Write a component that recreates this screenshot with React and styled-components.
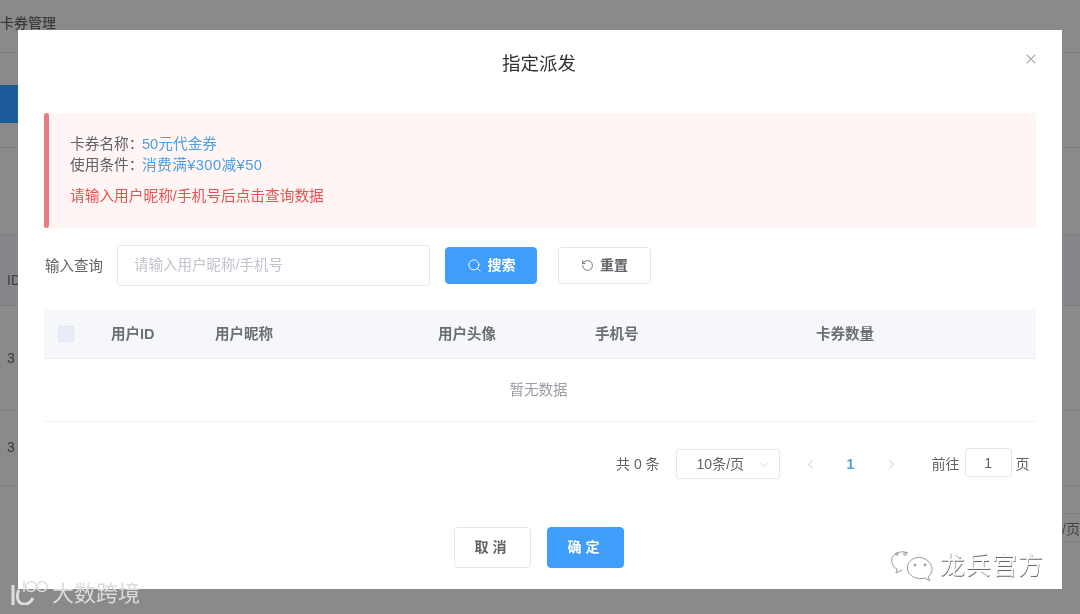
import styled, { createGlobalStyle } from 'styled-components';
import { ChevronDown, ChevronLeft, ChevronRight, RotateCw, Search, X } from 'lucide-react';

const GlobalStyle = createGlobalStyle`
  html, body {
    margin: 0;
    padding: 0;
    overflow: hidden;
    background: #8a8a8a;
  }

  * {
    box-sizing: border-box;
  }

  body {
    font-family: "Liberation Sans", "Noto Sans CJK SC", sans-serif;
  }
`;

const Screen = styled.div`
  position: relative;
  width: 1080px;
  height: 614px;
  overflow: hidden;
  background: #8a8a8a;
  filter: blur(0.45px);
`;

const BackPage = styled.div`
  display: flex;
  flex-direction: column;
  height: 100%;
  color: #3a3a3a;
  font-size: 14px;
`;

const BackRow = styled.div`
  flex: none;
  display: flex;
  align-items: ${(props) => props.$align || 'center'};
  height: ${(props) => props.$height}px;
  padding: ${(props) => props.$padding || '0 0 0 7px'};
  background: ${(props) => props.$tint || 'transparent'};
  border-bottom: 1px solid #7e7e7e;
  white-space: nowrap;
`;

const BackTitle = styled.span`
  font-weight: 500;
  color: #3c3c3c;
`;

const BackButton = styled.div`
  width: 18px;
  height: 38px;
  margin-top: 32px;
  background: #1c5c9a;
`;

const BackPager = styled.div`
  display: flex;
  align-items: center;
  justify-content: flex-end;
  align-self: flex-end;
  width: 40px;
  height: 29px;
  margin-top: 27px;
  color: #444;
  border-top: 1px solid #7e7e7e;
  border-bottom: 1px solid #7e7e7e;
`;

const Dialog = styled.section`
  position: absolute;
  top: 30px;
  left: 18px;
  display: flex;
  flex-direction: column;
  width: 1044px;
  height: 559px;
  padding: 0 26px;
  background: #fff;
`;

const Title = styled.h2`
  margin: 0;
  padding: 23px 2px 0 0;
  height: 83px;
  font-size: 18.5px;
  font-weight: 400;
  line-height: 22px;
  text-align: center;
  color: #303133;
`;

const CloseButton = styled.button`
  position: absolute;
  top: 21px;
  right: 23px;
  display: flex;
  width: 16px;
  height: 16px;
  padding: 0;
  color: #a9adb4;
  background: none;
  border: none;
`;

const Alert = styled.div`
  position: relative;
  height: 115px;
  padding: 21px 26px 0;
  font-size: 14.7px;
  line-height: 21px;
  color: #606266;
  background: #fff5f5;
  border-radius: 3px;

  &::before {
    content: '';
    position: absolute;
    top: 0;
    bottom: 0;
    left: 0;
    width: 5px;
    background: #ea7b83;
    border-radius: 3px;
  }
`;

const Value = styled.span`
  margin-left: -1.5px;
  letter-spacing: ${(props) => props.$spacing || 0}px;
  color: #4b9fe3;
`;

const AlertHint = styled.div`
  margin-top: 10px;
  color: #ee4f4f;
`;

const SearchRow = styled.div`
  display: flex;
  align-items: center;
  height: 41px;
  margin-top: 17px;
`;

const SearchLabel = styled.label`
  width: 73px;
  padding: 0 0 3px 1px;
  font-size: 14.5px;
  color: #606266;
`;

const SearchInput = styled.input`
  width: 313px;
  height: 41px;
  padding: 0 16px 2px;
  font-family: inherit;
  font-size: 14.5px;
  background: #fff;
  border: 1px solid #e4e7ed;
  border-radius: 4px;

  &::placeholder {
    color: #c0c4cc;
  }
`;

const Button = styled.button`
  display: inline-flex;
  align-items: center;
  justify-content: center;
  gap: ${(props) => props.$gap || 6}px;
  width: ${(props) => props.$width}px;
  height: ${(props) => props.$height}px;
  margin-left: ${(props) => props.$left || 0}px;
  padding: 0 0 3px;
  font-family: inherit;
  font-size: 14px;
  font-weight: 700;
  letter-spacing: ${(props) => props.$spacing || 0}px;
  color: ${(props) => (props.$primary ? '#fff' : '#606266')};
  background: ${(props) => (props.$primary ? '#3f9efc' : '#fff')};
  border: 1px solid ${(props) => (props.$primary ? '#3f9efc' : '#e4e7ed')};
  border-radius: 4px;

  svg {
    margin-top: 3px;
  }
`;

const TableHead = styled.div`
  display: grid;
  grid-template-columns: 67px 104px 223px 157px 221px 1fr;
  align-items: center;
  height: 49px;
  margin-top: 24px;
  padding-bottom: 3px;
  font-size: 14.5px;
  font-weight: 700;
  color: #6b6e74;
  background: #f5f7fa;
  border-bottom: 1px solid #e9ecf1;
`;

const CheckCell = styled.div`
  padding: 3px 0 0 14px;
`;

const CheckBox = styled.span`
  display: block;
  width: 16px;
  height: 16px;
  background: #e9edf8;
  border: 1px solid #e1e6f3;
  border-radius: 2px;
`;

const Empty = styled.div`
  display: flex;
  align-items: center;
  justify-content: center;
  height: 63px;
  padding: 0 3px 4px 0;
  font-size: 14.5px;
  color: #9a9da3;
  border-bottom: 1px solid #f0f1f4;
`;

const Pager = styled.div`
  display: flex;
  align-items: center;
  height: 30px;
  margin-top: 27px;
  padding-left: 572px;
  font-size: 14px;
  line-height: 28px;
  color: #606266;
`;

const PagerText = styled.span`
  padding-bottom: 1px;
`;

const Select = styled.div`
  display: flex;
  align-items: center;
  justify-content: space-between;
  width: 104px;
  height: 30px;
  margin-left: 16px;
  padding: 0 8px 0 20px;
  color: #606266;
  border: 1px solid #e4e7ed;
  border-radius: 3px;
`;

const PageArrow = styled.span`
  display: flex;
  justify-content: center;
  width: 16px;
  margin-left: ${(props) => props.$left}px;
  color: #c0c4cc;
`;

const PageNumber = styled.span`
  width: 8px;
  margin-left: 28px;
  font-weight: 700;
  color: #4b9fe3;
`;

const GoLabel = styled(PagerText)`
  margin-left: 32px;
`;

const PageInput = styled.div`
  align-self: flex-start;
  width: 47px;
  height: 29px;
  margin: -1px 4px 0 5px;
  font-size: 14px;
  line-height: 28px;
  text-align: center;
  border: 1px solid #e4e7ed;
  border-radius: 3px;
`;

const Footer = styled.div`
  display: flex;
  justify-content: center;
  gap: 16px;
  margin-top: 48px;
  padding-right: 2px;
`;

const WeChatMark = styled.div`
  position: absolute;
  top: 550px;
  left: 891px;
  display: flex;
  align-items: center;
  gap: 6px;
  font-size: 25px;
  letter-spacing: 1px;
  color: #fafafa;
  text-shadow: 0.6px 0.6px 0.6px #666;
`;

const WeChatText = styled.span`
  margin-top: -7px;
`;

const BrandMark = styled.div`
  position: absolute;
  top: 575px;
  left: 9px;
  display: flex;
  align-items: flex-end;
  gap: 3px;
  font-size: 22px;
  color: #dcdcdc;
`;

const BrandText = styled.span`
  margin-bottom: -1px;
  line-height: 24px;
`;

function WeChatIcon() {
  return (
    <svg width="43" height="32" viewBox="0 0 43 32" fill="none" stroke="#9a9a9a" strokeWidth="1">
      <path d="M17 3C10 0 3 3 1 8c-1 5 1 9 5 11l-1 4 6-3" />
      <circle cx="6" cy="4" r="1.3" />
      <circle cx="14" cy="4" r="1.3" />
      <path d="M37 27c4-3 5-8 3-12-3-6-10-9-16-7-6 2-9 8-7 13 2 6 10 9 17 7l5 3z" fill="#fff" />
      <circle cx="24" cy="15" r="1" fill="#999" />
      <circle cx="34" cy="15" r="1" fill="#999" />
    </svg>
  );
}

function BrandIcon() {
  return (
    <svg width="40" height="30" viewBox="0 0 40 30" fill="none" stroke="#dedede">
      <path d="M4 10v20" strokeWidth="3" />
      <path d="M10 15c-3 5-2 13 4 14 4 1 8-2 10-6" strokeWidth="3" />
      <path d="M15 6v11" strokeWidth="1.5" />
      <circle cx="22" cy="11.5" r="5" strokeWidth="1.6" />
      <circle cx="33" cy="11.5" r="5" strokeWidth="1.6" />
    </svg>
  );
}

export default function App() {
  return (
    <Screen>
      <GlobalStyle />
      <BackPage>
        <BackRow $height={53} $padding="0 0 8px 0">
          <BackTitle>卡券管理</BackTitle>
        </BackRow>
        <BackRow $height={95} $align="flex-start" $padding="0">
          <BackButton />
        </BackRow>
        <BackRow $height={87} />
        <BackRow $height={71} $tint="#84868a" $padding="20px 0 0 7px">ID</BackRow>
        <BackRow $height={105}>3</BackRow>
        <BackRow $height={75} $padding="0 0 2px 7px">3</BackRow>
        <BackPager>/页</BackPager>
      </BackPage>

      <Dialog>
        <Title>指定派发</Title>
        <CloseButton aria-label="关闭">
          <X size={16} strokeWidth={1.6} />
        </CloseButton>

        <Alert>
          <div>卡券名称：<Value>50元代金券</Value></div>
          <div>使用条件：<Value $spacing={0.4}>消费满¥300减¥50</Value></div>
          <AlertHint>请输入用户昵称/手机号后点击查询数据</AlertHint>
        </Alert>

        <SearchRow>
          <SearchLabel>输入查询</SearchLabel>
          <SearchInput placeholder="请输入用户昵称/手机号" readOnly />
          <Button $primary $width={92} $height={37} $left={15}>
            <Search size={15} strokeWidth={1.5} />
            搜索
          </Button>
          <Button $width={93} $height={37} $left={21}>
            <RotateCw size={13} strokeWidth={1.6} style={{ transform: 'scaleX(-1)' }} />
            重置
          </Button>
        </SearchRow>

        <TableHead>
          <CheckCell><CheckBox /></CheckCell>
          <span>用户ID</span>
          <span>用户昵称</span>
          <span>用户头像</span>
          <span>手机号</span>
          <span>卡券数量</span>
        </TableHead>
        <Empty>暂无数据</Empty>

        <Pager>
          <PagerText>共 0 条</PagerText>
          <Select>
            <PagerText>10条/页</PagerText>
            <ChevronDown size={15} strokeWidth={1.2} color="#c8cbd1" />
          </Select>
          <PageArrow $left={23}><ChevronLeft size={15} strokeWidth={1.5} /></PageArrow>
          <PageNumber>1</PageNumber>
          <PageArrow $left={29}><ChevronRight size={15} strokeWidth={1.5} /></PageArrow>
          <GoLabel>前往</GoLabel>
          <PageInput>1</PageInput>
          <PagerText>页</PagerText>
        </Pager>

        <Footer>
          <Button $width={77} $height={41} $gap={0} $spacing={4}>取消</Button>
          <Button $primary $width={77} $height={41} $gap={0} $spacing={4}>确定</Button>
        </Footer>
      </Dialog>

      <WeChatMark>
        <WeChatIcon />
        <WeChatText>龙兵宫方</WeChatText>
      </WeChatMark>
      <BrandMark>
        <BrandIcon />
        <BrandText>大数跨境</BrandText>
      </BrandMark>
    </Screen>
  );
}
